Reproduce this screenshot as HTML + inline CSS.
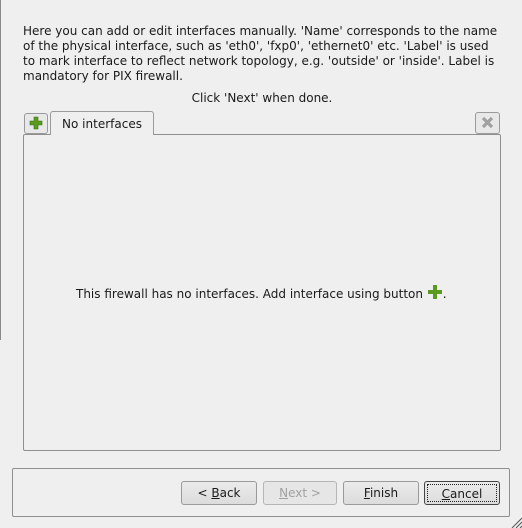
<html><head><style>
body{margin:0;width:522px;height:528px;background:#efefef;font-family:"DejaVu Sans","Liberation Sans",sans-serif;font-size:12px;color:#1a1a1a;position:relative;overflow:hidden}
.a{position:absolute}
.p{left:23px;top:24px;width:480px;line-height:15px}
.btn{position:absolute;top:481px;height:22px;border:1px solid #9a9a9a;border-radius:3px;background:linear-gradient(#ebebeb,#dcdcdc);text-align:center;line-height:22px;font-size:12px}
u{text-decoration:underline}
</style></head><body>
<div class="a" style="left:0;top:0;width:1px;height:340px;background:#8a8a8a"></div>
<div class="a p">Here you can add or edit interfaces manually. 'Name' corresponds to the name of the physical interface, such as 'eth0', 'fxp0', 'ethernet0' etc. 'Label' is used to mark interface to reflect network topology, e.g. 'outside' or 'inside'. Label is mandatory for PIX firewall.</div>
<div class="a" style="left:0;width:522px;top:91px;text-align:center;padding-left:1px">Click 'Next' when done.</div>
<div class="a" style="left:23px;top:134px;width:476px;height:315px;border:1px solid #8f8f8f;border-radius:2px"></div>
<div class="a" style="left:24px;top:113px;width:22px;height:19px;border:1px solid #9a9a9a;border-radius:3px;background:#e8e8e8">
<svg width="22" height="19" viewBox="0 0 22 19"><path d="M9 3h4v4h4v4h-4v4h-4v-4h-4v-4h4z" fill="#5a9a1e" stroke="#3d6f10" stroke-width=".6"/></svg></div>
<div class="a" style="left:50px;top:111px;width:102px;height:23px;border:1px solid #9a9a9a;border-bottom:none;border-radius:3px 3px 0 0;background:#efefef;text-align:center;line-height:24px">No interfaces</div>
<div class="a" style="left:51px;top:134px;width:101px;height:1px;background:#efefef"></div>
<div class="a" style="left:475px;top:112px;width:23px;height:20px;border:1px solid #9a9a9a;border-radius:3px;background:#e8e8e8">
<svg width="23" height="20" viewBox="0 0 23 20"><path d="M7 5l9 9M16 5l-9 9" stroke="#a0a0a0" stroke-width="3.2"/></svg></div>
<div class="a" style="left:76px;top:285px">This firewall has no interfaces. Add interface using button <svg width="16" height="14" viewBox="0 0 16 14" style="vertical-align:-1px"><path d="M6 0h4v5h5v4h-5v5h-4v-5h-5v-4h5z" fill="#5a9a1e"/></svg>.</div>
<div class="a" style="left:12px;top:468px;width:496px;height:47px;border:1px solid #8f8f8f;border-radius:2px"></div>
<div class="btn" style="left:181px;width:74px">&lt; <u>B</u>ack</div>
<div class="btn" style="left:263px;width:72px;color:#a0a0a0;background:#e6e6e6;border-color:#b5b5b5"><u>N</u>ext &gt;</div>
<div class="btn" style="left:343px;width:74px"><u>F</u>inish</div>
<div class="btn" style="left:424px;width:74px;border-color:#444"><div style="position:absolute;left:2px;top:2px;right:2px;bottom:2px;border:1px dotted #222;line-height:18px"><u>C</u>ancel</div></div>
<svg class="a" style="left:508px;top:514px" width="14" height="14"><path d="M4 14L14 4M8 14L14 8M12 14L14 12" stroke="#555" stroke-width="1"/></svg>
</body></html>
